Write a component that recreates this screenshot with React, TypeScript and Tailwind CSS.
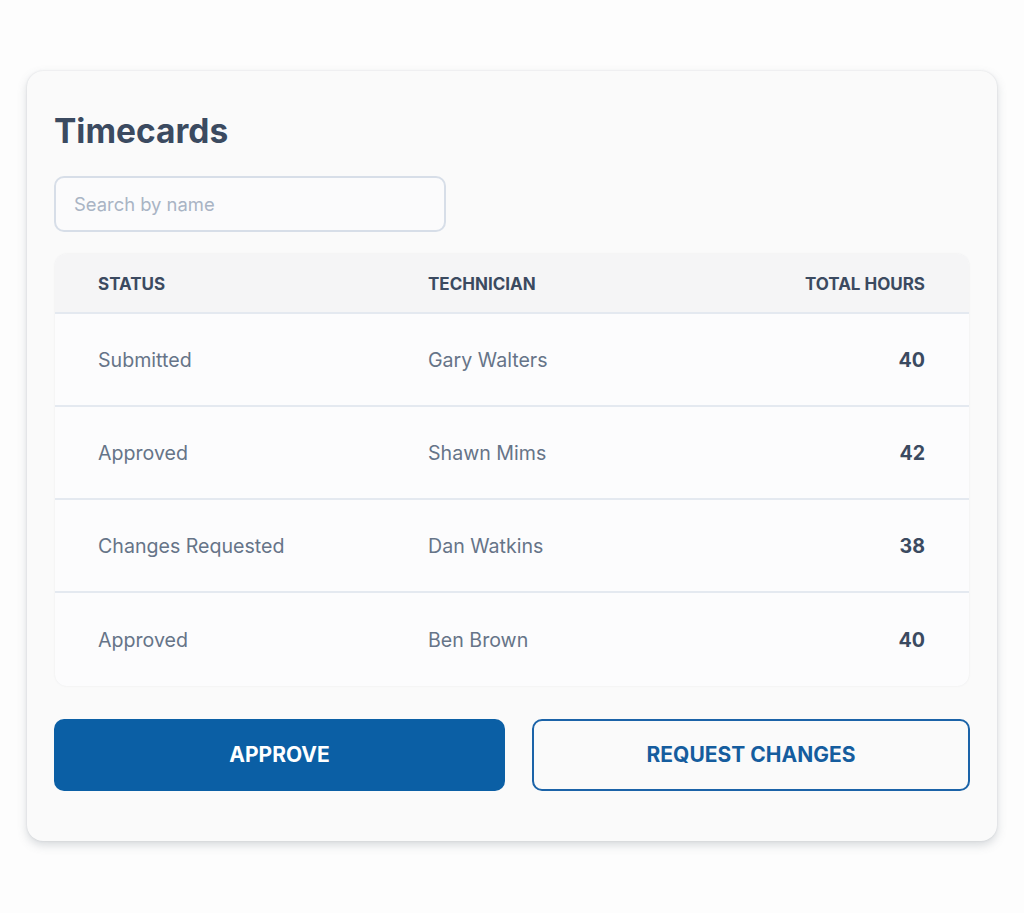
const rows = [
  { status: "Submitted", tech: "Gary Walters", hours: 40 },
  { status: "Approved", tech: "Shawn Mims", hours: 42 },
  { status: "Changes Requested", tech: "Dan Watkins", hours: 38 },
  { status: "Approved", tech: "Ben Brown", hours: 40 },
];

export default function App() {
  return (
    <div className="min-h-[913px] bg-[#fdfdfd] pt-[71px] pl-[27px] font-['Inter',sans-serif]">
      <div className="w-[970px] rounded-2xl bg-[#fafafa] px-[27px] pt-[40px] pb-[50px] shadow-[0_4px_10px_rgba(100,110,125,0.25),0_0_2px_rgba(100,110,125,0.2)]">
        <h1 className="text-[33.5px] font-bold leading-10 text-[#3b4a60]">Timecards</h1>

        <input
          type="text"
          placeholder="Search by name"
          className="mt-[25px] h-14 w-[392px] rounded-[10px] border-2 border-[#d7dee8] bg-[#fbfbfc] px-[18px] text-[18.4px] text-[#334155] outline-none placeholder:text-[#a9b4c4]"
        />

        <div className="mt-[22px] ml-px mr-[1px] overflow-hidden rounded-t-xl rounded-b-xl bg-[#fcfcfd] shadow-[0_0_2px_rgba(100,110,125,0.12)]">
          <div className="grid h-[60px] grid-cols-[330px_1fr_200px] items-center border-b-2 border-[#e4e9f0] bg-[#f5f5f6] pt-1 pl-[43px] pr-[44px] text-[17px] font-bold uppercase text-[#3b4a60]">
            <div>Status</div>
            <div>Technician</div>
            <div className="text-right">Total Hours</div>
          </div>
          {rows.map((r, i) => (
            <div
              key={i}
              className={
                "grid h-[93px] grid-cols-[330px_1fr_200px] items-center pl-[43px] pr-[44px] text-[19.6px] " +
                (i < rows.length - 1 ? "border-b-2 border-[#e4e9f0]" : "")
              }
            >
              <div className="pt-[3px] text-[#667488]">{r.status}</div>
              <div className="pt-[3px] text-[#667488]">{r.tech}</div>
              <div className="pt-[3px] text-right font-bold text-[#3b4a60]">{r.hours}</div>
            </div>
          ))}
        </div>

        <div className="mt-[33px] flex gap-[27px]">
          <button className="h-[72px] w-[451px] rounded-[10px] bg-[#0b5fa5] text-[21px] font-bold text-white">
            APPROVE
          </button>
          <button className="h-[72px] flex-1 rounded-[10px] border-2 border-[#1b63a8] text-[21px] font-bold text-[#155d9e]">
            REQUEST CHANGES
          </button>
        </div>
      </div>
    </div>
  );
}
